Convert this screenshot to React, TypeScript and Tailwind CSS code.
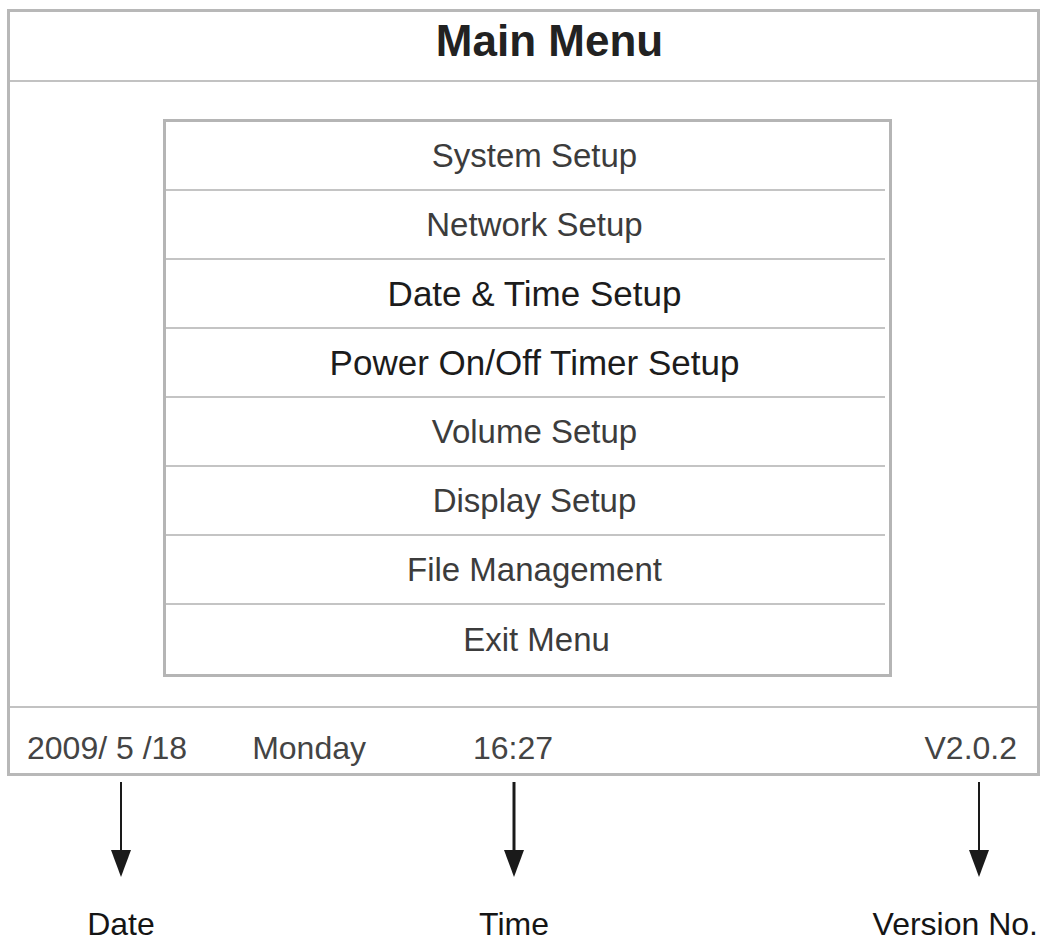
const menuItems = [
  { label: "System Setup", size: "text-[33px]", tone: "text-[#3c3c3c]" },
  { label: "Network Setup", size: "text-[33px]", tone: "text-[#3c3c3c]" },
  { label: "Date & Time Setup", size: "text-[35px]", tone: "text-[#1c1c1c]" },
  { label: "Power On/Off Timer Setup", size: "text-[35px]", tone: "text-[#1c1c1c]" },
  { label: "Volume Setup", size: "text-[33px]", tone: "text-[#3c3c3c]" },
  { label: "Display Setup", size: "text-[33px]", tone: "text-[#3c3c3c]" },
  { label: "File Management", size: "text-[33px]", tone: "text-[#3c3c3c]" },
  { label: "Exit Menu", size: "text-[33px]", tone: "text-[#3c3c3c]" },
]

const DownArrow = ({ heavy = false }: { heavy?: boolean }) => (
  <svg width="22" height="96" viewBox="0 0 22 96">
    <line x1="11" y1="0" x2="11" y2="72" stroke="#1a1a1a" strokeWidth={heavy ? 3 : 2} />
    <polygon points="1,68 21,68 11,95" fill="#1a1a1a" />
  </svg>
)

const App = () => {
  return (
    <div className="min-h-[942px] w-[1045px] bg-white font-['Liberation_Sans',Arial,sans-serif]">
      {/* Screen frame */}
      <div className="ml-[7px] pt-[9px]">
        <div className="flex h-[767px] w-[1033px] flex-col border-[3px] border-[#b8b8b8]">
          {/* Title bar */}
          <div className="flex h-[70px] items-center justify-center border-b-2 border-[#c2c2c2] pb-[10px] pl-[52px]">
            <span className="text-[44px] leading-none font-bold text-[#222]">Main Menu</span>
          </div>

          {/* Menu list */}
          <div className="flex-1 pt-[37px] pl-[153px]">
            <div className="flex w-[729px] flex-col border-[3px] border-[#b5b5b5]">
              {menuItems.map((item, i) => (
                <div
                  key={item.label}
                  className={`flex h-[69px] items-center justify-center pl-[18px] ${
                    i < menuItems.length - 1 ? "mr-[4px] border-b-2 border-[#c4c4c4]" : ""
                  }`}
                >
                  <span className={`${item.size} ${item.tone} leading-none`}>{item.label}</span>
                </div>
              ))}
            </div>
          </div>

          {/* Status bar */}
          <div className="flex h-[67px] items-center border-t-2 border-[#c2c2c2] pt-[14px] pr-[20px] pl-[17px] text-[32px] leading-none text-[#444]">
            <span>2009/ 5 /18</span>
            <span className="ml-[65px]">Monday</span>
            <span className="ml-[107px]">16:27</span>
            <span className="ml-auto">V2.0.2</span>
          </div>
        </div>
      </div>

      {/* Callouts */}
      <div className="flex pt-[6px] text-[32px] leading-none text-[#151515]">
        <div className="ml-[71px] flex w-[100px] flex-col items-center">
          <DownArrow />
          <span className="mt-[30px]">Date</span>
        </div>
        <div className="ml-[293px] flex w-[100px] flex-col items-center">
          <DownArrow heavy />
          <span className="mt-[30px]">Time</span>
        </div>
        <div className="flex flex-1 flex-col items-end pr-[7px]">
          <div className="mr-[48px]">
            <DownArrow />
          </div>
          <span className="mt-[30px]">Version No.</span>
        </div>
      </div>
    </div>
  )
}

export default App
